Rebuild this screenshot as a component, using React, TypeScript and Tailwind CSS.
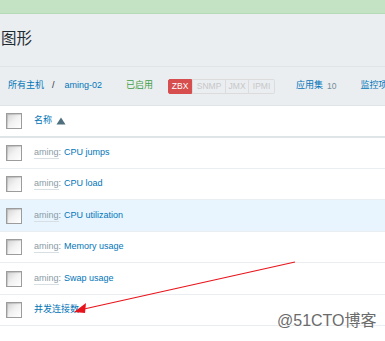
const font = { fontFamily: '"Liberation Sans", "Noto Sans CJK SC", sans-serif' }

const rows = [
  { host: true, name: 'CPU jumps', h: 'h-[31px]' },
  { host: true, name: 'CPU load', h: 'h-[31px]' },
  { host: true, name: 'CPU utilization', h: 'h-[32px]', active: true },
  { host: true, name: 'Memory usage', h: 'h-[31px]' },
  { host: true, name: 'Swap usage', h: 'h-[32px]' },
  { host: false, name: '并发连接数', h: 'h-[31px]' },
]

function Checkbox() {
  return (
    <span className="block w-4 h-4 border border-[#9c9c9c] bg-gradient-to-br from-[#d4d4d4] via-[#f2f2f2] to-white shadow-[inset_1px_1px_1px_rgba(0,0,0,0.15)]" />
  )
}

export default function App() {
  return (
    <div className="relative w-[385px] h-[341px] overflow-hidden bg-[#ebeef1] text-[9px]" style={font}>
      <div className="h-[14px] bg-[#c3e3c4] border-b border-[#b4d9b5]" />

      <div className="h-[52px] pl-px pt-[15px] text-[15.5px] leading-[20px] text-[#1f2c33]">图形</div>

      <div className="h-[40px] border-y border-[#dfe4e7] flex items-center whitespace-nowrap">
        <span className="ml-2 text-[#0275b8]">所有主机</span>
        <span className="ml-[8px] text-[#1f2c33]">/</span>
        <span className="ml-[10px] text-[#0275b8]">aming-02</span>
        <span className="ml-[24px] text-[#429e47]">已启用</span>
        <div className="ml-[15px] flex h-[15px] text-[8.5px] leading-[13px]">
          <span className="w-6 text-center bg-[#d64e4e] border border-[#d64e4e] text-white rounded-l-[2px]">ZBX</span>
          <span className="w-[34px] text-center border border-[#dcdcdc] text-[#c7c7c7]">SNMP</span>
          <span className="w-[23px] text-center border border-l-0 border-[#dcdcdc] text-[#c7c7c7]">JMX</span>
          <span className="w-[26px] text-center border border-l-0 border-[#dcdcdc] text-[#c7c7c7] rounded-r-[2px]">IPMI</span>
        </div>
        <span className="ml-[21px] text-[#0275b8]">应用集</span>
        <span className="ml-[4px] text-[8.5px] text-[#768d99]">10</span>
        <span className="ml-[24px] text-[#0275b8]">监控项</span>
      </div>

      <div className="bg-white h-full">
        <div className="h-[32px] flex items-center border-b-2 border-[#dfe4e7]">
          <div className="w-[34px] pl-[6px]">
            <Checkbox />
          </div>
          <span className="text-[#0275b8]">名称</span>
          <svg width="10" height="8" viewBox="0 0 10 8" className="ml-[4px]">
            <path d="M0.5 7.5 L5 0.5 L9.5 7.5 Z" fill="#4f6f7e" />
          </svg>
        </div>
        {rows.map((r) => (
          <div
            key={r.name}
            className={`${r.h} flex items-center border-b border-[#ebeef1] ${r.active ? 'bg-[#e8f5ff]' : ''}`}
          >
            <div className="w-[34px] pl-[6px]">
              <Checkbox />
            </div>
            {r.host && (
              <>
                <span className="text-[#8a9ca6] border-b border-[#d8dfe3] leading-[11px]">aming</span>
                <span className="text-[#768d99] mr-[3px]">:</span>
              </>
            )}
            <span className="text-[#0275b8]">{r.name}</span>
          </div>
        ))}
      </div>

      <svg className="absolute left-0 top-0 pointer-events-none" width="385" height="341">
        <line x1="295" y1="262" x2="84" y2="309" stroke="#e8141b" strokeWidth="1.2" />
        <path d="M74 312 L86 303 L85 313 Z" fill="#e8141b" />
      </svg>

      <div className="absolute left-[277px] top-[310px] whitespace-nowrap text-[16px] leading-[22px] text-[#6b6b6b]">@51CTO博客</div>
    </div>
  )
}
